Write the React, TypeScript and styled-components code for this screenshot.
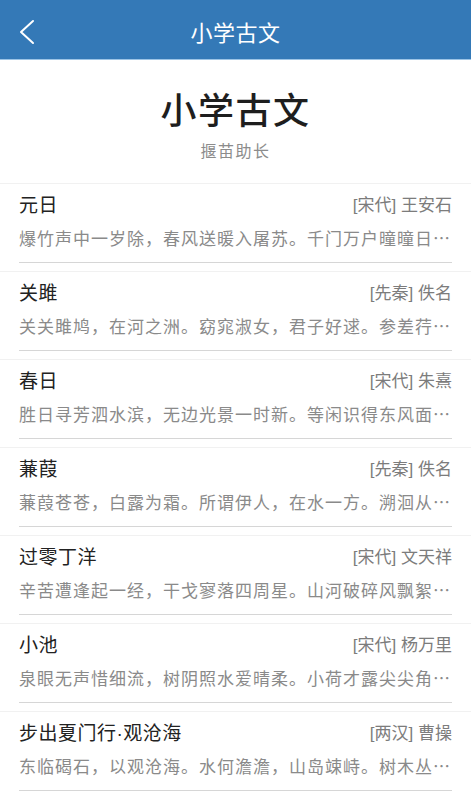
import React from "react";
import styled, { createGlobalStyle } from "styled-components";

const poems = [
  { title: "元日", era: "宋代", author: "王安石", text: "爆竹声中一岁除，春风送暖入屠苏。千门万户曈曈日…" },
  { title: "关雎", era: "先秦", author: "佚名", text: "关关雎鸠，在河之洲。窈窕淑女，君子好逑。参差荇…" },
  { title: "春日", era: "宋代", author: "朱熹", text: "胜日寻芳泗水滨，无边光景一时新。等闲识得东风面…" },
  { title: "蒹葭", era: "先秦", author: "佚名", text: "蒹葭苍苍，白露为霜。所谓伊人，在水一方。溯洄从…" },
  { title: "过零丁洋", era: "宋代", author: "文天祥", text: "辛苦遭逢起一经，干戈寥落四周星。山河破碎风飘絮…" },
  { title: "小池", era: "宋代", author: "杨万里", text: "泉眼无声惜细流，树阴照水爱晴柔。小荷才露尖尖角…" },
  { title: "步出夏门行·观沧海", era: "两汉", author: "曹操", text: "东临碣石，以观沧海。水何澹澹，山岛竦峙。树木丛…" },
];

const App = () => {
  return (
    <Page>
      <GlobalStyle />
      <Header>
        <BackButton aria-label="返回">
          <svg width="16" height="26" viewBox="0 0 16 26">
            <polyline points="14,2 2,13 14,24" fill="none" stroke="#fff" strokeWidth="2" strokeLinecap="round" strokeLinejoin="round" />
          </svg>
        </BackButton>
        <HeaderTitle>小学古文</HeaderTitle>
      </Header>
      <Hero>
        <BigTitle>小学古文</BigTitle>
        <Subtitle>揠苗助长</Subtitle>
      </Hero>
      <List>
        {poems.map((p) => (
          <Item key={p.title}>
            <Inner>
              <TopRow>
                <PoemTitle>{p.title}</PoemTitle>
                <Meta>
                  [{p.era}] {p.author}
                </Meta>
              </TopRow>
              <Excerpt>{p.text}</Excerpt>
            </Inner>
          </Item>
        ))}
      </List>
    </Page>
  );
};

const GlobalStyle = createGlobalStyle`
  html, body {
    margin: 0;
    padding: 0;
    background: #fff;
    overflow: hidden;
  }
  body {
    font-family: "Noto Sans CJK SC", "Noto Sans", sans-serif;
  }
`;

const Page = styled.div`
  width: 100%;
  min-height: 791px;
  background: #fff;
`;

const Header = styled.header`
  position: relative;
  height: 59px;
  background: #3479b7;
  border-bottom: 1px solid #9cc4e6;
  display: flex;
  align-items: center;
  justify-content: center;
`;

const BackButton = styled.div`
  position: absolute;
  left: 19px;
  top: 19px;
  display: flex;
`;

const HeaderTitle = styled.h1`
  margin: 2px 0 0;
  font-size: 22px;
  font-weight: 400;
  letter-spacing: 0.5px;
  color: #fff;
`;

const Hero = styled.div`
  display: flex;
  flex-direction: column;
  align-items: center;
  padding: 26px 0 23px;
`;

const BigTitle = styled.h2`
  margin: 0;
  font-size: 36px;
  line-height: 44px;
  font-weight: 500;
  letter-spacing: 1.5px;
  color: #1e1e1e;
`;

const Subtitle = styled.div`
  margin-top: 10px;
  font-size: 16px;
  line-height: 20px;
  letter-spacing: 1.5px;
  color: #8c8c8c;
`;

const List = styled.div`
  display: flex;
  flex-direction: column;
`;

const Item = styled.div`
  border-top: 1px solid #f1f1f1;
  padding-bottom: 8px;
`;

const Inner = styled.div`
  margin: 0 19px;
  padding: 9px 0 12px;
  border-bottom: 1px solid #d6d6d6;
`;

const TopRow = styled.div`
  display: flex;
  align-items: center;
  justify-content: space-between;
  height: 26px;
`;

const PoemTitle = styled.div`
  font-family: "Liberation Sans", "Noto Sans CJK SC", sans-serif;
  font-size: 19px;
  line-height: 26px;
  color: #222;
  letter-spacing: 0.5px;
`;

const Meta = styled.div`
  font-family: "Liberation Sans", "Noto Sans CJK SC", sans-serif;
  font-size: 17px;
  line-height: 26px;
  color: #7c7c7c;
`;

const Excerpt = styled.div`
  margin-top: 7px;
  font-size: 17px;
  line-height: 24px;
  letter-spacing: 1px;
  color: #8a8a8a;
  white-space: nowrap;
`;

export default App;
